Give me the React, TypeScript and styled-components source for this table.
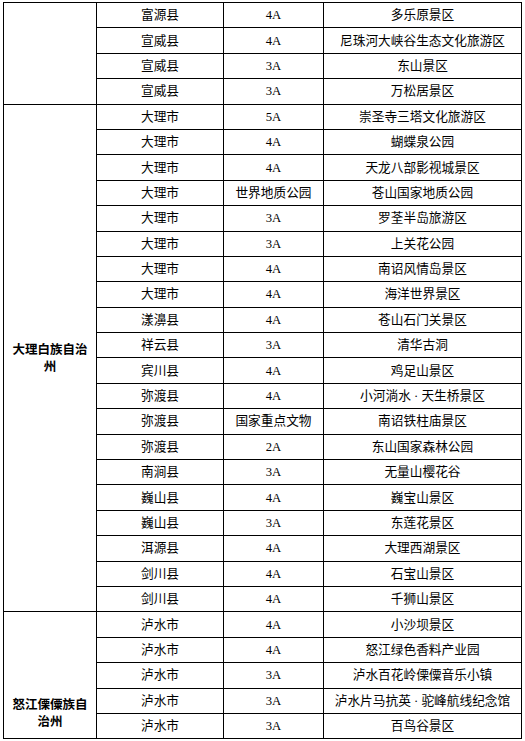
import styled, { createGlobalStyle } from "styled-components";

type Row = [string, string, string];

type Group = {
  region: string;
  valign: "middle" | "bottom";
  rows: Row[];
};

const groups: Group[] = [
  {
    region: "",
    valign: "middle",
    rows: [
      ["富源县", "4A", "多乐原景区"],
      ["宣威县", "4A", "尼珠河大峡谷生态文化旅游区"],
      ["宣威县", "3A", "东山景区"],
      ["宣威县", "3A", "万松居景区"],
    ],
  },
  {
    region: "大理白族自治州",
    valign: "middle",
    rows: [
      ["大理市", "5A", "崇圣寺三塔文化旅游区"],
      ["大理市", "4A", "蝴蝶泉公园"],
      ["大理市", "4A", "天龙八部影视城景区"],
      ["大理市", "世界地质公园", "苍山国家地质公园"],
      ["大理市", "3A", "罗荃半岛旅游区"],
      ["大理市", "3A", "上关花公园"],
      ["大理市", "4A", "南诏风情岛景区"],
      ["大理市", "4A", "海洋世界景区"],
      ["漾濞县", "4A", "苍山石门关景区"],
      ["祥云县", "3A", "清华古洞"],
      ["宾川县", "4A", "鸡足山景区"],
      ["弥渡县", "4A", "小河淌水 · 天生桥景区"],
      ["弥渡县", "国家重点文物", "南诏铁柱庙景区"],
      ["弥渡县", "2A", "东山国家森林公园"],
      ["南涧县", "3A", "无量山樱花谷"],
      ["巍山县", "4A", "巍宝山景区"],
      ["巍山县", "3A", "东莲花景区"],
      ["洱源县", "4A", "大理西湖景区"],
      ["剑川县", "4A", "石宝山景区"],
      ["剑川县", "4A", "千狮山景区"],
    ],
  },
  {
    region: "怒江傈僳族自治州",
    valign: "bottom",
    rows: [
      ["泸水市", "4A", "小沙坝景区"],
      ["泸水市", "4A", "怒江绿色香料产业园"],
      ["泸水市", "3A", "泸水百花岭傈僳音乐小镇"],
      ["泸水市", "3A", "泸水片马抗英 · 驼峰航线纪念馆"],
      ["泸水市", "3A", "百鸟谷景区"],
    ],
  },
];

const colWidths = [93, 127, 100, 198];

const GlobalStyle = createGlobalStyle`
  html, body {
    margin: 0;
    padding: 0;
    background: #ffffff;
    overflow: hidden;
  }
`;

const Page = styled.div`
  width: 525px;
  height: 741px;
  padding: 2px 0 0 3px;
  box-sizing: border-box;
  overflow: hidden;
`;

const Table = styled.table`
  border-collapse: collapse;
  table-layout: fixed;
  width: 518px;
  font-family: "Liberation Serif", "Noto Sans CJK SC", serif;
  color: #000;
`;

const Col = styled.col<{ $w: number }>`
  width: ${(p) => p.$w}px;
`;

const Line = styled.tr`
  height: 25.4px;
`;

const Cell = styled.td`
  border: 1px solid #000;
  padding: 0 4px;
  text-align: center;
  vertical-align: middle;
  font-size: 12.7px;
  line-height: 16px;
  white-space: nowrap;
`;

const RegionCell = styled.td<{ $valign: "middle" | "bottom" }>`
  border: 1px solid #000;
  padding: 0 5px ${(p) => (p.$valign === "bottom" ? "9px" : "0")};
  text-align: center;
  vertical-align: ${(p) => p.$valign};
  font-family: "Noto Sans CJK SC", sans-serif;
  font-weight: 700;
  font-size: 12.5px;
  line-height: 16.5px;
`;

export default function App() {
  return (
    <>
      <GlobalStyle />
      <Page>
        <Table>
          <colgroup>
            {colWidths.map((w, i) => (
              <Col key={i} $w={w} />
            ))}
          </colgroup>
          <tbody>
            {groups.map((g) =>
              g.rows.map((r, i) => (
                <Line key={g.region + i}>
                  {i === 0 && (
                    <RegionCell rowSpan={g.rows.length} $valign={g.valign}>
                      {g.region}
                    </RegionCell>
                  )}
                  <Cell>{r[0]}</Cell>
                  <Cell>{r[1]}</Cell>
                  <Cell>{r[2]}</Cell>
                </Line>
              ))
            )}
          </tbody>
        </Table>
      </Page>
    </>
  );
}
